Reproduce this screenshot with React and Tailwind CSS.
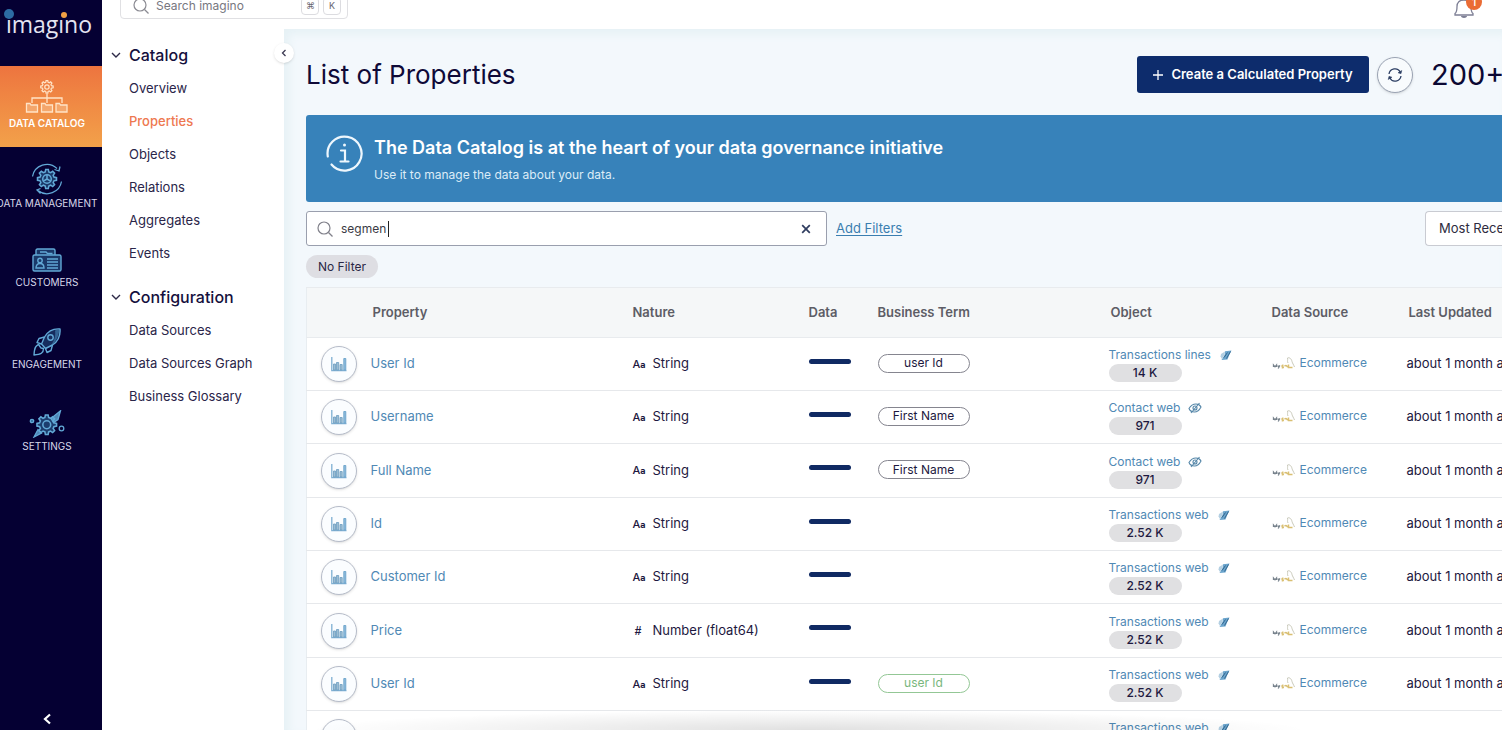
import React from "react";

const NAV = [
  { label: "DATA CATALOG", icon: "catalog", active: true },
  { label: "DATA MANAGEMENT", icon: "management", tall: true },
  { label: "CUSTOMERS", icon: "customers" },
  { label: "ENGAGEMENT", icon: "engagement" },
  { label: "SETTINGS", icon: "settings" },
];

const CATALOG = ["Overview", "Properties", "Objects", "Relations", "Aggregates", "Events"];
const CONFIG = ["Data Sources", "Data Sources Graph", "Business Glossary"];

const ROWS = [
  { name: "User Id", type: "String", term: "user Id", object: "Transactions lines", count: "14 K" },
  { name: "Username", type: "String", term: "First Name", object: "Contact web", count: "971", hidden: true },
  { name: "Full Name", type: "String", term: "First Name", object: "Contact web", count: "971", hidden: true },
  { name: "Id", type: "String", object: "Transactions web", count: "2.52 K" },
  { name: "Customer Id", type: "String", object: "Transactions web", count: "2.52 K" },
  { name: "Price", type: "Number (float64)", object: "Transactions web", count: "2.52 K" },
  { name: "User Id", type: "String", term: "user Id", suggested: true, object: "Transactions web", count: "2.52 K" },
  { name: "Id", type: "String", object: "Transactions web", count: "2.52 K" },
];

const GEAR =
  "M10.6 2h2.8l.5 2.6 1.9.8 2.2-1.5 2 2-1.5 2.2.8 1.9 2.7.6v2.8l-2.7.5-.8 1.9 1.5 2.2-2 2-2.2-1.5-1.9.8-.5 2.7h-2.8l-.5-2.7-1.9-.8L6 20l-2-2 1.5-2.2-.8-1.9L2 13.4v-2.8l2.7-.6.8-1.9L4 5.9l2-2 2.2 1.5 1.9-.8z";

function NavIcon({ name }) {
  if (name === "catalog")
    return (
      <svg className="h-9 w-11" viewBox="0 0 44 36" fill="none" stroke="#ffe3c6" strokeWidth="1.3" aria-hidden="true">
        <g transform="translate(14.5 0.5) scale(0.62)" strokeWidth="2">
          <path d={GEAR} />
          <circle cx="12" cy="12" r="3.5" />
        </g>
        <path d="M22 15v9M7 24v-5h30v5" />
        <g fill="#ffe3c6" fillOpacity=".3">
          <path d="M1.500 33V24.500h3.500l1 1.500h6.500v7z" />
          <path d="M16.500 33V24.500H20l1 1.500h6.500v7z" />
          <path d="M31 33V24.500h3.500l1 1.500H42v7z" />
        </g>
      </svg>
    );
  if (name === "management")
    return (
      <svg className="size-8" viewBox="0 0 32 32" fill="none" stroke="#62a8d6" strokeWidth="1.3" aria-hidden="true">
        <g transform="translate(4.6 4.6) scale(0.95)" strokeWidth="1.6">
          <path d={GEAR} fill="#2f6f9f" fillOpacity=".5" />
          <circle cx="12" cy="12" r="4.5" />
          <path d="M12 7.500V12l3.800 2.300M12 12l-3.800 2.300" />
        </g>
        <path d="M1.500 13.500A14.600 14.600 0 0 1 26 5.500M29 3.500l-1 4.500-4.500-1.500M30.500 18.500A14.600 14.600 0 0 1 7 27.500M9.500 30.500 6 27l3.500-1.500" />
      </svg>
    );
  if (name === "customers")
    return (
      <svg className="h-7 w-8" viewBox="0 -2 32 28" fill="none" stroke="#62a8d6" strokeWidth="1.4" aria-hidden="true">
        <path d="M5 7V2.500C5 1.500 5.500 1 6.500 1h16c1 0 1.500.5 1.500 1.500V7" fill="#2f6f9f" fillOpacity=".5" />
        <path d="M9 4h6l1.500 1.500h5" />
        <rect x="2" y="7" width="28" height="16" rx="1.5" fill="#2f6f9f" fillOpacity=".5" />
        <circle cx="9" cy="12.5" r="2.2" />
        <path d="M5 20c0-3 1.500-4.500 4-4.500s4 1.500 4 4.500zM16 11h11M16 14h11M16 17h11M16 20h11" />
      </svg>
    );
  if (name === "engagement")
    return (
      <svg className="size-7" viewBox="0 0 28 28" fill="none" stroke="#62a8d6" strokeWidth="1.4" strokeLinejoin="round" aria-hidden="true">
        <path d="M27 1c-6-.5-12 2-15.500 8L8.500 16l4 4.500 7-3.500C25 13.500 27.500 7 27 1z" fill="#2f6f9f" fillOpacity=".4" />
        <path d="M22 2.500 26.800 1 25 8c-1.500 4-3.500 7-7 9.500C21 13 23 8 22 2.500z" fill="#4a8fc0" fillOpacity=".55" stroke="none" />
        <circle cx="17.5" cy="9.5" r="2.7" />
        <path d="M11.500 9 6 10.500l-2 4 4.500 1.500M19.500 17 18 22.500l-4 2-1.500-4M5.500 16.500C3 18 1.500 18.500 1 27c7-.5 9.500-2 9.500-6.500l-2.500-.5z" />
      </svg>
    );
  return (
    <svg className="h-7 w-9" viewBox="0 0 36 28" fill="none" stroke="#62a8d6" strokeWidth="1.3" aria-hidden="true">
      <g transform="translate(6 3) scale(0.98)" strokeWidth="1.6">
        <path d={GEAR} fill="#2f6f9f" fillOpacity=".55" />
        <circle cx="12" cy="12" r="4" />
      </g>
      <path d="M5 27 9 19.500l3.500 3.500zM22 8.500 31.500.8 29 9.500l-4.500 3z" fill="#62a8d6" fillOpacity=".8" />
      <circle cx="3" cy="11" r="1.7" fill="#2f6f9f" />
      <circle cx="32.5" cy="18.5" r="2.3" />
    </svg>
  );
}

function ChartIcon() {
  return (
    <svg className="size-4" viewBox="0 0 16 16" fill="none" aria-hidden="true">
      <path d="M.8 1v13.700H15.500" stroke="#7fb0d3" strokeWidth="1.3" />
      <path d="M2.500 8h2v6h-2zM5.500 6.500h2.200V14H5.500zM9 8.500h2.200V14H9z" fill="#9dbdd2" stroke="#6b9dc0" strokeWidth=".8" />
      <path d="M12.800 2.500h2V14h-2z" fill="#8dbbdc" stroke="#6ba3cb" strokeWidth=".9" />
    </svg>
  );
}

function ObjectIcon({ hidden }) {
  if (hidden)
    return (
      <svg className="h-3 w-3.5" viewBox="0 0 14 12" fill="none" stroke="#5486a8" strokeWidth="1.1" aria-hidden="true">
        <path d="M1 6.500C3 3 5.500 2 8 2s4 1 5 3c-2 3.800-4 5-6.500 5S2 9 1 6.500z" />
        <circle cx="7" cy="6" r="2" />
        <path d="M3 11 11.500 1" />
      </svg>
    );
  return (
    <svg className="h-3 w-3.5" viewBox="0 0 14 12" fill="none" aria-hidden="true">
      <path d="M6 2.200 12.500 1.500 10 6.500l-1.500 4-6 .5L5.500 6z" fill="#6ba5cd" />
      <path d="M2 5 6 2.500 5 6.500 3 10 1.500 7.500z" fill="#b3cfe2" />
      <path d="M5 8.500 8.500 3.500M7.500 9.500l4-7" stroke="#2d5f87" strokeWidth=".9" />
    </svg>
  );
}

function MysqlIcon() {
  return (
    <svg className="h-4 w-6 shrink-0" viewBox="0 0 24 16" fill="none" aria-hidden="true">
      <path d="M1.500 12v-2l1.500 1.800L4.500 10v2M5.700 10.500l1 1.500 1.100-1.500-1.600 3" stroke="#77828c" strokeWidth="1.3" />
      <path d="M11.500 10.500c-1.500-.5-2 .9-.8 1.200s.5 1.300-1 .9M12.500 11c2-1 3 0 2.500 1.200M16.500 9.500v3h4" stroke="#d9bf72" strokeWidth="1.5" />
      <path d="M15.500 3c2-1 4 1 4.500 3.500.6 2 1.500 3 2.500 5.500M15.500 3c.5 2-.5 3 .5 5" stroke="#c9c9ba" strokeWidth="1" />
    </svg>
  );
}

function SideGroup({ title, items, selected }) {
  return (
    <div>
      <button type="button" className="flex h-8 items-center gap-2 text-base font-medium text-[#15103d]">
        <svg className="size-2.5" viewBox="0 0 10 10" fill="none" stroke="#2d2a48" strokeWidth="1.4" aria-hidden="true">
          <path d="M1 3l4 4 4-4" />
        </svg>
        {title}
      </button>
      <ul className="pt-px">
        {items.map((it) => (
          <li key={it} className="h-[33px] pl-[18px]">
            <a
              href="#"
              className={
                it === selected
                  ? "block text-[13px] leading-[33px] font-medium text-[#ee7850]"
                  : "block text-[13px] leading-[33px] text-[#2a2549]"
              }
            >
              {it}
            </a>
          </li>
        ))}
      </ul>
    </div>
  );
}

const TH = "text-left font-semibold";

export default function App() {
  return (
    <div className="flex h-screen overflow-hidden bg-white pr-1 font-['Inter','Liberation_Sans',sans-serif] text-[#1d1840]">
      <nav className="flex w-[102px] shrink-0 flex-col bg-[#050033] text-white" aria-label="Main">
        <div className="flex h-[66px] shrink-0 items-start justify-center pt-2 pr-1">
          <div className="relative font-['Open_Sans','Noto_Sans',sans-serif] text-[23px] leading-8 font-medium text-[#e4e4f2]">
            ımagıno
            <span className="absolute top-px -left-0.5 size-2.5 rounded-full bg-[#2c6ca3]" />
            <span className="absolute top-1 left-[55px] size-1.5 rounded-full bg-[#f2a044]" />
          </div>
        </div>
        {NAV.map((n) => (
          <a
            key={n.label}
            href="#"
            className={
              n.active
                ? "flex h-[81px] shrink-0 flex-col items-center justify-end bg-linear-to-b from-[#ed743f] to-[#f2a14a] pr-2 pb-4 text-[10px] leading-4 font-semibold whitespace-nowrap"
                : n.tall
                  ? "flex h-[82px] shrink-0 flex-col items-center justify-end pr-2 pb-[18px] text-[10px] leading-4 whitespace-nowrap text-[#d8d8ea]"
                  : "flex h-[82px] shrink-0 flex-col items-center justify-end pr-2 pb-[21px] text-[10px] leading-4 whitespace-nowrap text-[#d8d8ea]"
            }
          >
            <NavIcon name={n.icon} />
            <span>{n.label}</span>
          </a>
        ))}
        <button type="button" aria-label="Collapse menu" className="mt-auto flex h-[22px] items-center justify-center pr-2">
          <svg className="size-3" viewBox="0 0 12 12" fill="none" stroke="#fff" strokeWidth="2.2" aria-hidden="true">
            <path d="M9 1.500 4 6l5 4.500" />
          </svg>
        </button>
      </nav>

      <div className="flex min-w-0 flex-1 flex-col">
        <header className="flex h-[29px] shrink-0 items-end justify-between bg-white pr-5 pl-[18px]">
          <div className="mb-2.5 flex h-[26px] w-[228px] shrink-0 items-center rounded border border-[#e0e0e3] pr-1.5 pl-3">
            <svg className="size-4 shrink-0" viewBox="0 0 16 16" fill="none" stroke="#8a8a92" strokeWidth="1.2" aria-hidden="true">
              <circle cx="7" cy="7" r="6" />
              <path d="m11.500 11.500 4 4" />
            </svg>
            <input
              aria-label="Search imagino"
              placeholder="Search imagino"
              className="mx-[7px] min-w-0 flex-1 text-xs outline-none placeholder:text-[#77777f]"
            />
            <kbd className="mr-1 flex size-[18px] items-center justify-center rounded border border-[#dcdce0] font-sans text-[9px] text-[#66666f]">⌘</kbd>
            <kbd className="flex size-[18px] items-center justify-center rounded border border-[#dcdce0] font-['Inter',sans-serif] text-[9px] text-[#66666f]">K</kbd>
          </div>
          <button type="button" aria-label="Notifications" className="relative mb-[11px] h-6 w-7 shrink-0">
            <svg className="h-6 w-5" viewBox="0 0 20 24" fill="none" stroke="#7d7f95" strokeWidth="1.3" aria-hidden="true">
              <path d="M1 21v-1.500c1.500-1 2-3 2-7C3 8.500 5.500 6 10 6s7 2.500 7 6.500c0 4 .5 6 2 7V21z" />
              <path d="M7.500 22c.5 1.800 4.500 1.800 5 0" fill="#7d7f95" />
            </svg>
            <span className="absolute top-0 left-3 flex size-4 items-center justify-center rounded-full bg-[#ea6c35] text-[11px] font-medium text-white">1</span>
          </button>
        </header>

        <div className="flex min-h-0 flex-1">
          <aside className="relative w-[182px] shrink-0 bg-white pt-[10px] pl-[9px]">
            <SideGroup title="Catalog" items={CATALOG} selected="Properties" />
            <div className="mt-[11px]">
              <SideGroup title="Configuration" items={CONFIG} />
            </div>
            <button
              type="button"
              aria-label="Collapse panel"
              className="absolute top-3.5 -right-2.5 z-10 flex size-5 items-center justify-center rounded-full bg-white shadow"
            >
              <svg className="size-2" viewBox="0 0 8 8" fill="none" stroke="#3c3a52" strokeWidth="1.3" aria-hidden="true">
                <path d="M5.500 1 2.500 4l3 3" />
              </svg>
            </button>
          </aside>

          <main className="relative min-w-0 flex-1 overflow-hidden bg-[#f3f8fc] pl-[22px] shadow-[inset_5px_5px_8px_#e6f1f5]">
            <div className="flex h-[86px] items-center pt-[5px]">
              <h1 className="flex-1 text-[26px] text-[#0f0a38]">List of Properties</h1>
              <button
                type="button"
                className="flex h-[37px] w-[232px] shrink-0 items-center justify-center gap-2 rounded-[3px] bg-[#0d2c6c] text-[13px] font-semibold whitespace-nowrap text-white"
              >
                <svg className="size-2.5" viewBox="0 0 10 10" stroke="#fff" strokeWidth="1.3" aria-hidden="true">
                  <path d="M5 0v10M0 5h10" />
                </svg>
                Create a Calculated Property
              </button>
              <button
                type="button"
                aria-label="Refresh"
                className="ml-2 flex size-9 shrink-0 items-center justify-center rounded-full border border-[#9aa3b3] bg-[#f8fbfd] shadow-sm"
              >
                <svg className="size-4" viewBox="0 0 16 16" fill="none" stroke="#2c3e63" strokeWidth="1.3" aria-hidden="true">
                  <path d="M2 7a6 6 0 0 1 11.300-1.800M14 9A6 6 0 0 1 2.700 10.800" />
                  <path d="m14.800 3.500-.8 3.200-3-.9zM1.200 12.500 2 9.300l3 .9z" fill="#2c3e63" strokeWidth=".5" />
                </svg>
              </button>
              <span className="ml-[18px] w-[71px] shrink-0 text-[29px] text-[#0b0833]">200+</span>
            </div>

            <section className="flex h-[87px] items-start rounded-l-[3px] bg-[#3782ba] pt-[19px] pl-5 text-white">
              <svg className="mt-px size-[37px] shrink-0" viewBox="0 0 37 37" fill="none" stroke="#eef7fd" strokeWidth="2.2" strokeLinecap="round" aria-hidden="true">
                <path d="M1.800 21.500A17 17 0 1 1 5.500 29.500" />
                <path d="M15 15.500h4V26M14.500 26.500h8" />
                <circle cx="18.5" cy="10" r="1.5" fill="#eef7fd" stroke="none" />
              </svg>
              <div className="ml-[11px]">
                <h2 className="text-lg leading-7 font-semibold">The Data Catalog is at the heart of your data governance initiative</h2>
                <p className="text-xs leading-[26px] text-[#dcecf7]">Use it to manage the data about your data.</p>
              </div>
            </section>

            <div className="mt-[9px] flex h-[35px] items-center">
              <div className="flex h-full w-[521px] shrink-0 items-center rounded-[3px] border border-[#9a9fae] bg-white px-2.5">
                <svg className="size-4 shrink-0" viewBox="0 0 16 16" fill="none" stroke="#80808a" strokeWidth="1.2" aria-hidden="true">
                  <circle cx="7" cy="7" r="6" />
                  <path d="m11.500 11.500 4 4" />
                </svg>
                <div className="ml-2 flex min-w-0 flex-1 items-center">
                  <input
                    aria-label="Filter properties"
                    defaultValue="segmen"
                    className="w-[47px] text-xs text-[#3b3b45] outline-none"
                  />
                  <span className="h-4 w-px bg-[#222]" />
                </div>
                <button type="button" aria-label="Clear" className="mr-0.5 flex size-4 items-center justify-center">
                  <svg className="size-2.5" viewBox="0 0 10 10" stroke="#2f3c5f" strokeWidth="1.7" aria-hidden="true">
                    <path d="m1.200 1.200 7.600 7.600M8.800 1.200 1.200 8.800" />
                  </svg>
                </button>
              </div>
              <a href="#" className="ml-[9px] text-[13px] text-[#3a7eb0] underline underline-offset-2">Add Filters</a>
              <button
                type="button"
                className="ml-auto h-full w-[77px] shrink-0 overflow-hidden rounded-l-[4px] border border-r-0 border-[#c9cbd2] bg-white pl-[13px] text-left text-[13px] whitespace-nowrap text-[#2d2b40]"
              >
                Most Recent
              </button>
            </div>

            <button type="button" className="mt-[9px] block h-[23px] rounded-full bg-[#dedee3] px-3 text-xs text-[#2b2745]">
              No Filter
            </button>

            <table className="mt-[9px] w-[1240px] table-fixed border-collapse border-l border-[#e8edf1] bg-white text-[13px]">
              <colgroup>
                <col className="w-[64px]" />
                <col className="w-[262px]" />
                <col className="w-[176px]" />
                <col className="w-[69px]" />
                <col className="w-[231px]" />
                <col className="w-[163px]" />
                <col className="w-[135px]" />
                <col className="w-[140px]" />
              </colgroup>
              <thead>
                <tr className="h-[50px] border-y border-[#e8ebee] bg-[#f5f7f8] text-[#5d5d66]">
                  <th />
                  <th scope="col" className={TH + " pl-0.5"}>Property</th>
                  <th scope="col" className={TH}>Nature</th>
                  <th scope="col" className={TH}>Data</th>
                  <th scope="col" className={TH}>Business Term</th>
                  <th scope="col" className={TH + " pl-0.5"}>Object</th>
                  <th scope="col" className={TH}>Data Source</th>
                  <th scope="col" className={TH + " pl-0.5"}>Last Updated</th>
                </tr>
              </thead>
              <tbody>
                {ROWS.map((r, i) => (
                  <tr key={i} className="h-[53px] border-b border-[#e6e8eb] nth-[3n]:h-[54px]">
                    <td className="pl-[14px]">
                      <span className="flex size-9 items-center justify-center rounded-full border border-[#b6bcc9] bg-[#fbfdff] shadow-sm">
                        <ChartIcon />
                      </span>
                    </td>
                    <td>
                      <a href="#" className="text-[#5089b5]">{r.name}</a>
                    </td>
                    <td>
                      <span className="flex items-center">
                        {r.type === "String" ? (
                          <span className="w-5 text-[11px] font-medium">A<span className="text-[9px] font-bold">a</span></span>
                        ) : (
                          <span className="w-5 pl-0.5 font-['Liberation_Sans',sans-serif] text-xs font-bold italic">#</span>
                        )}
                        {r.type}
                      </span>
                    </td>
                    <td>
                      <span className="mb-1.5 block h-[5px] w-[42px] rounded-full bg-[#102a63]" />
                    </td>
                    <td>
                      {r.term && (
                        <span
                          className={
                            r.suggested
                              ? "mb-0.5 flex h-[19px] w-[92px] items-center justify-center rounded-full border border-[#93c795] text-xs text-[#79b77d]"
                              : "mb-0.5 flex h-[19px] w-[92px] items-center justify-center rounded-full border border-[#85858f] text-xs"
                          }
                        >
                          {r.term}
                        </span>
                      )}
                    </td>
                    <td>
                      <a href="#" className="flex items-center gap-2 text-xs leading-[18px] whitespace-nowrap text-[#5089b5]">
                        {r.object}
                        <ObjectIcon hidden={r.hidden} />
                      </a>
                      <span className="flex h-[18px] w-[73px] items-center justify-center rounded-full bg-[#e0e0e2] text-xs font-medium">{r.count}</span>
                    </td>
                    <td>
                      <a href="#" className="mb-0.5 flex items-center gap-1 text-xs text-[#5089b5]">
                        <MysqlIcon />
                        Ecommerce
                      </a>
                    </td>
                    <td className="whitespace-nowrap">about 1 month ago</td>
                  </tr>
                ))}
              </tbody>
            </table>
            <div className="pointer-events-none absolute bottom-0 left-6 h-5 w-[1000px] bg-radial-[50%_100%_at_50%_100%] from-black/12 to-transparent" />
          </main>
        </div>
      </div>
    </div>
  );
}
